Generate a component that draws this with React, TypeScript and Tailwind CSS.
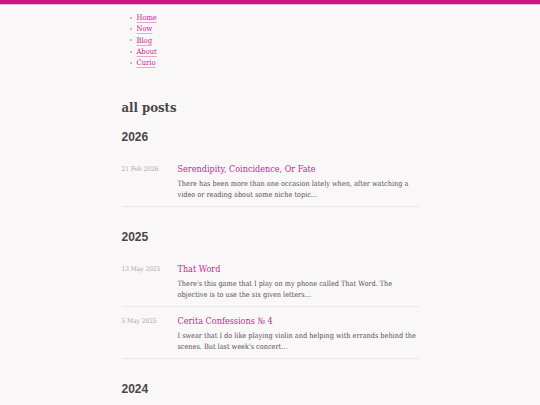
import React from 'react';

type Post = { date: string; title: string; excerpt: string };

const years: { year: string; posts: Post[] }[] = [
  {
    year: '2026',
    posts: [
      {
        date: '21 Feb 2026',
        title: 'Serendipity, Coincidence, Or Fate',
        excerpt: 'There has been more than one occasion lately when, after watching a video or reading about some niche topic…',
      },
    ],
  },
  {
    year: '2025',
    posts: [
      {
        date: '13 May 2025',
        title: 'That Word',
        excerpt: "There's this game that I play on my phone called That Word. The objective is to use the six given letters…",
      },
      {
        date: '5 May 2025',
        title: 'Cerita Confessions № 4',
        excerpt: "I swear that I do like playing violin and helping with errands behind the scenes. But last week's concert…",
      },
    ],
  },
  { year: '2024', posts: [] },
];

const serif = { fontFamily: '"DejaVu Serif", "Liberation Serif", serif', fontStretch: 'condensed' };

export default function App() {
  return (
    <div className="min-h-screen bg-[#faf7f9] text-[#3d3a3c]" style={serif}>
      <div className="h-[4px] bg-[#c8157f]" />
      <div className="h-px bg-[#f4b6d9]" />

      <div className="mx-auto w-[297px]">
        {/* Nav */}
        <ul className="pl-[8px] pt-[7px] text-[7.5px] leading-[11.3px]">
          {['Home', 'Now', 'Blog', 'About', 'Curio'].map(item => (
            <li key={item} className="flex items-center">
              <span className="mr-[5px] h-[2px] w-[2px] bg-[#c4bfc2]" />
              <a href="#" className="text-[#c8288f] underline decoration-[#e9a6cf] underline-offset-2">
                {item}
              </a>
            </li>
          ))}
        </ul>

        <h1 className="mt-[32px] text-[13px] font-bold leading-[16px] text-[#4a4648]">all posts</h1>

        {years.map(y => (
          <section key={y.year} className="mt-[13px] mb-[22px]">
            <h2
              className="text-[12px] font-bold leading-[16px] text-[#4a4648]"
              style={{ fontFamily: '"Liberation Sans", Arial, sans-serif', fontStretch: 'normal' }}
            >
              {y.year}
            </h2>
            <div className="mt-[10px]">
              {y.posts.map(p => (
                <div key={p.title} className="flex border-b border-[#ebe7e9] pt-[8px] pb-[6px]">
                  <div className="w-[56px] shrink-0 pt-[1px] text-[6.5px] leading-[10px] text-[#a8a3a6]">{p.date}</div>
                  <div className="flex-1">
                    <a href="#" className="block text-[9px] leading-[12px] text-[#c8288f]">
                      {p.title}
                    </a>
                    <p className="mt-[3px] text-[7.3px] leading-[11px] tracking-[-0.02px] text-[#555153]">{p.excerpt}</p>
                  </div>
                </div>
              ))}
            </div>
          </section>
        ))}
      </div>
    </div>
  );
}
